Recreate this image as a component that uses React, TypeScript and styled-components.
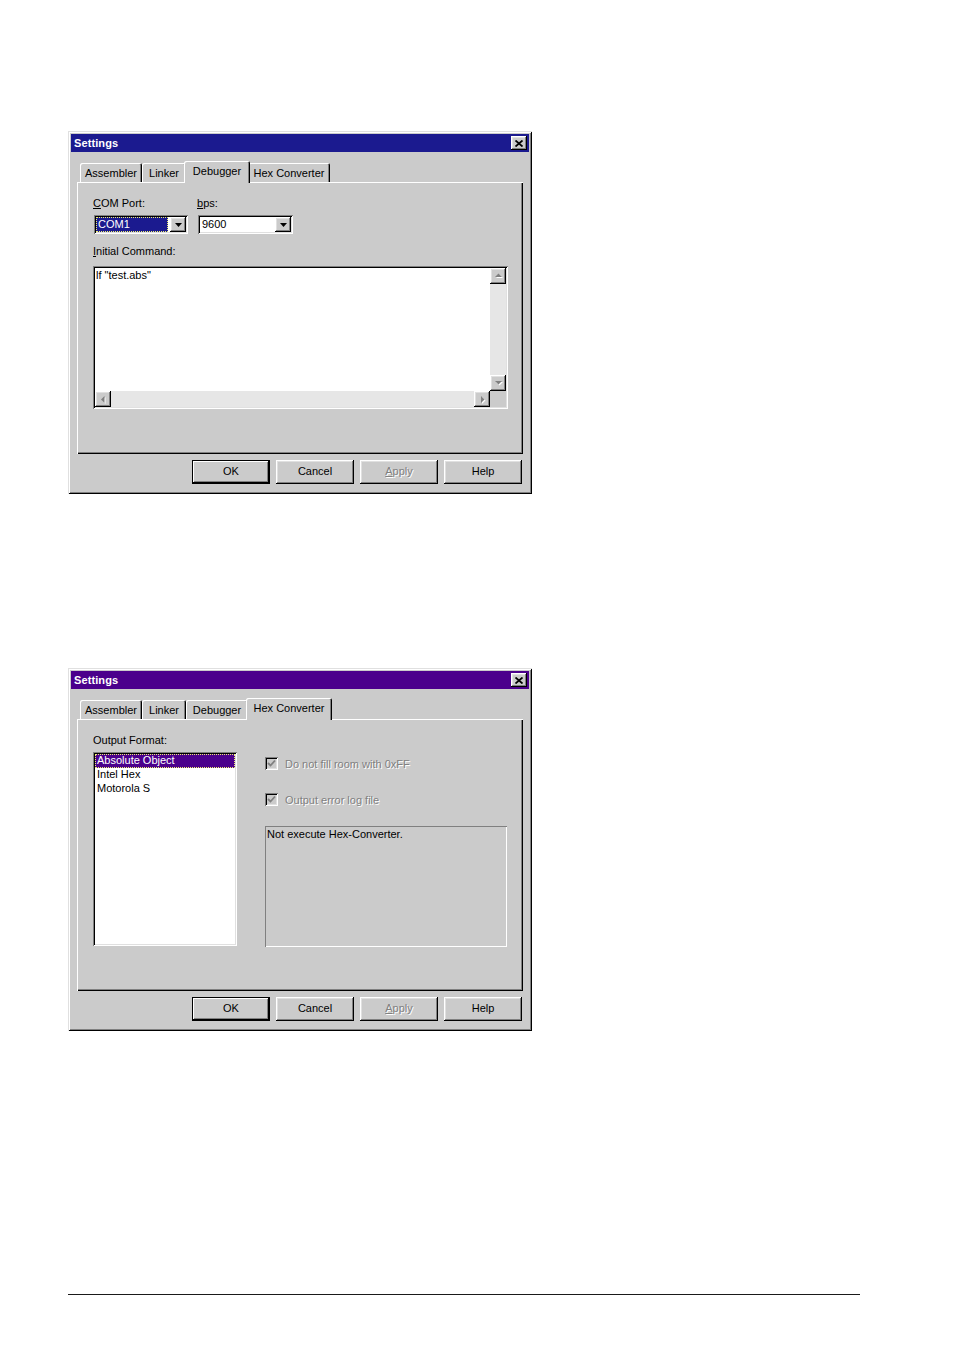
import React from "react";
import styled, { createGlobalStyle, css } from "styled-components";

const FACE = "#cbcbcb";
const SHADOW = "#808080";
const LIGHT = "#e0e0e0";

const GlobalStyle = createGlobalStyle`
  html, body { margin: 0; padding: 0; background: #fff; }
  body {
    font-family: "Liberation Sans", Arial, sans-serif;
    font-size: 11px;
    color: #000;
  }
  * { box-sizing: border-box; }
`;

const raised = css`
  box-shadow: inset -1px -1px #000, inset 1px 1px #fff, inset -2px -2px ${SHADOW}, inset 2px 2px ${LIGHT};
`;
const sunken = css`
  box-shadow: inset 1px 1px ${SHADOW}, inset -1px -1px #fff, inset 2px 2px #000, inset -2px -2px ${LIGHT};
`;

const Page = styled.div`
  display: flex;
  flex-direction: column;
  align-items: flex-start;
  padding: 131px 0 40px 68px;
`;

const Dialog = styled.div<{ $gap?: number }>`
  width: 464px;
  height: 363px;
  padding: 3px;
  margin-top: ${(p) => p.$gap ?? 0}px;
  background: ${FACE};
  display: flex;
  flex-direction: column;
  box-shadow: inset 1px 1px ${LIGHT}, inset -1px -1px #000, inset 2px 2px #fff, inset -2px -2px ${SHADOW};
`;

const TitleBar = styled.div<{ $bg: string }>`
  height: 18px;
  background: ${(p) => p.$bg};
  display: flex;
  align-items: center;
  justify-content: space-between;
  padding: 0 2px 0 3px;
`;

const TitleText = styled.span`
  color: #fff;
  font-weight: bold;
  font-size: 11px;
  letter-spacing: 0.1px;
`;

const CloseButton = styled.div`
  width: 16px;
  height: 14px;
  background: ${FACE};
  ${raised};
  display: flex;
  align-items: center;
  justify-content: center;
`;

const Body = styled.div`
  padding: 9px 6px 0 6px;
  display: flex;
  flex-direction: column;
`;

const TabStrip = styled.div`
  height: 21px;
  display: flex;
  align-items: flex-end;
  padding-left: 3px;
`;

const Tab = styled.div<{ $w: number; $active?: boolean }>`
  position: relative;
  width: ${(p) => (p.$active ? p.$w + 4 : p.$w)}px;
  height: ${(p) => (p.$active ? 22 : 19)}px;
  margin: 0 ${(p) => (p.$active ? -2 : 0)}px ${(p) => (p.$active ? -1 : 0)}px;
  z-index: ${(p) => (p.$active ? 2 : 1)};
  background: ${FACE};
  border-radius: 2px 2px 0 0;
  box-shadow: inset 1px 1px #fff, inset -1px 0 #000, inset -2px 0 ${SHADOW};
  display: flex;
  align-items: center;
  justify-content: center;
  padding-bottom: ${(p) => (p.$active ? 2 : 0)}px;
  white-space: nowrap;
`;

const Panel = styled.div`
  height: 272px;
  background: ${FACE};
  box-shadow: inset 1px 1px #fff, inset -1px -1px #000, inset -2px -2px ${SHADOW};
  padding: 15px 14px 0 16px;
  display: flex;
  flex-direction: column;
`;

const Fields = styled.div`
  display: flex;
  gap: 9px;
`;

const Field = styled.div`
  display: flex;
  flex-direction: column;
  gap: 5px;
`;

const Label = styled.span<{ $top?: number }>`
  line-height: 13px;
  height: 13px;
  margin-top: ${(p) => p.$top ?? 0}px;
`;

const U = styled.span`
  text-decoration: underline;
  text-underline-offset: 1px;
`;

const Combo = styled.div<{ $w: number }>`
  width: ${(p) => p.$w}px;
  height: 19px;
  margin-left: 1px;
  background: #fff;
  ${sunken};
  padding: 2px;
  display: flex;
`;

const ComboText = styled.div<{ $sel?: string }>`
  flex: 1;
  margin: 0 2px 0 0;
  padding-left: 2px;
  line-height: 15px;
  ${(p) =>
    p.$sel &&
    css`
      background: ${p.$sel};
      color: #fff;
      outline: 1px dotted #f0f070;
      outline-offset: -1px;
    `}
`;

const DropButton = styled.div`
  width: 16px;
  height: 15px;
  background: ${FACE};
  ${raised};
  display: flex;
  align-items: center;
  justify-content: center;
`;

const TextArea = styled.div`
  width: 415px;
  height: 143px;
  margin-top: 8px;
  background: #fff;
  ${sunken};
  padding: 2px;
  display: grid;
  grid-template-columns: 1fr 16px;
  grid-template-rows: 1fr 16px;
`;

const TextContent = styled.div`
  padding: 1px 1px;
  line-height: 13px;
`;

const ScrollV = styled.div`
  display: flex;
  flex-direction: column;
  background: #e6e6e6;
`;

const ScrollH = styled.div`
  display: flex;
  background: #e6e6e6;
`;

const Track = styled.div`
  flex: 1;
`;

const ScrollButton = styled.div`
  width: 16px;
  height: 16px;
  background: ${FACE};
  ${raised};
  display: flex;
  align-items: center;
  justify-content: center;
`;

const Corner = styled.div`
  background: ${FACE};
`;

const ButtonRow = styled.div`
  display: flex;
  justify-content: flex-end;
  gap: 6px;
  margin-top: 6px;
  padding-right: 1px;
`;

const Button = styled.div<{ $default?: boolean; $disabled?: boolean }>`
  width: 78px;
  height: 24px;
  padding-bottom: 2px;
  background: ${FACE};
  display: flex;
  align-items: center;
  justify-content: center;
  ${(p) =>
    p.$default
      ? css`
          box-shadow: inset 0 0 0 1px #000, inset -2px -2px #000, inset 2px 2px #fff, inset -3px -3px ${SHADOW};
        `
      : raised}
  ${(p) =>
    p.$disabled &&
    css`
      color: ${SHADOW};
      text-shadow: 1px 1px #fff;
    `}
`;

const Row = styled.div`
  display: flex;
  align-items: flex-start;
`;

const Column = styled.div<{ $ml?: number; $pt?: number }>`
  display: flex;
  flex-direction: column;
  margin-left: ${(p) => p.$ml ?? 0}px;
  padding-top: ${(p) => p.$pt ?? 0}px;
`;

const ListBox = styled.div`
  width: 144px;
  height: 194px;
  margin-top: 5px;
  background: #fff;
  ${sunken};
  padding: 2px;
  display: flex;
  flex-direction: column;
`;

const ListItem = styled.div<{ $sel?: string }>`
  height: 14px;
  line-height: 13px;
  padding-left: 2px;
  ${(p) =>
    p.$sel &&
    css`
      background: ${p.$sel};
      color: #fff;
      outline: 1px dotted #f0f070;
      outline-offset: -1px;
    `}
`;

const CheckRow = styled.div<{ $mt?: number }>`
  display: flex;
  align-items: center;
  gap: 7px;
  height: 13px;
  margin-top: ${(p) => p.$mt ?? 0}px;
`;

const CheckBox = styled.div`
  width: 13px;
  height: 13px;
  background: ${FACE};
  ${sunken};
  display: flex;
  align-items: center;
  justify-content: center;
`;

const DisabledText = styled.span`
  color: ${SHADOW};
  text-shadow: 1px 1px #fff;
`;

const StaticBox = styled.div`
  width: 242px;
  height: 121px;
  margin-top: 20px;
  box-shadow: inset 1px 1px ${SHADOW}, inset -1px -1px #fff;
  padding: 2px 2px;
  line-height: 13px;
`;

const FooterLine = styled.div`
  width: 792px;
  height: 1px;
  margin-top: 263px;
  background: #1a1a1a;
`;

const CloseIcon = () => (
  <svg width="8" height="7" viewBox="0 0 8 7">
    <path d="M0.5 0.5 L7.5 6.5 M7.5 0.5 L0.5 6.5" stroke="#000" strokeWidth="1.8" />
  </svg>
);

const DownArrow = () => (
  <svg width="7" height="4" viewBox="0 0 7 4">
    <path d="M0 0 H7 L3.5 4 Z" fill="#000" />
  </svg>
);

type Dir = "up" | "down" | "left" | "right";
const GrayArrow = ({ dir }: { dir: Dir }) => {
  const d: Record<Dir, string> = {
    up: "M1 5 H8 L4.5 1.5 Z",
    down: "M1 2 H8 L4.5 5.5 Z",
    left: "M5.5 1 V8 L2 4.5 Z",
    right: "M3 1 V8 L6.5 4.5 Z",
  };
  return (
    <svg width="9" height="9" viewBox="0 0 9 9">
      <path d={d[dir]} fill="#fff" transform="translate(1 1)" />
      <path d={d[dir]} fill={SHADOW} />
    </svg>
  );
};

const CheckMark = () => (
  <svg width="9" height="9" viewBox="0 0 9 9">
    <path d="M1 4 L3.5 6.5 L8 1.5" stroke={SHADOW} strokeWidth="1.8" fill="none" />
  </svg>
);

const TABS: { name: string; w: number }[] = [
  { name: "Assembler", w: 62 },
  { name: "Linker", w: 44 },
  { name: "Debugger", w: 62 },
  { name: "Hex Converter", w: 82 },
];

function Window({
  titleBg,
  active,
  gap,
  children,
}: {
  titleBg: string;
  active: string;
  gap?: number;
  children: React.ReactNode;
}) {
  return (
    <Dialog $gap={gap}>
      <TitleBar $bg={titleBg}>
        <TitleText>Settings</TitleText>
        <CloseButton>
          <CloseIcon />
        </CloseButton>
      </TitleBar>
      <Body>
        <TabStrip>
          {TABS.map((t) => (
            <Tab key={t.name} $w={t.w} $active={t.name === active}>
              {t.name}
            </Tab>
          ))}
        </TabStrip>
        <Panel>{children}</Panel>
        <ButtonRow>
          <Button $default>OK</Button>
          <Button>Cancel</Button>
          <Button $disabled>
            <U>A</U>pply
          </Button>
          <Button>Help</Button>
        </ButtonRow>
      </Body>
    </Dialog>
  );
}

const NAVY = "#1b1a8f";
const PURPLE = "#4b008c";

export default function App() {
  return (
    <>
      <GlobalStyle />
      <Page>
        <Window titleBg={NAVY} active="Debugger">
          <Fields>
            <Field>
              <Label>
                <U>C</U>OM Port:
              </Label>
              <Combo $w={94}>
                <ComboText $sel={NAVY}>COM1</ComboText>
                <DropButton>
                  <DownArrow />
                </DropButton>
              </Combo>
            </Field>
            <Field>
              <Label>
                <U>b</U>ps:
              </Label>
              <Combo $w={95}>
                <ComboText>9600</ComboText>
                <DropButton>
                  <DownArrow />
                </DropButton>
              </Combo>
            </Field>
          </Fields>
          <Label $top={11}>
            <U>I</U>nitial Command:
          </Label>
          <TextArea>
            <TextContent>lf "test.abs"</TextContent>
            <ScrollV>
              <ScrollButton>
                <GrayArrow dir="up" />
              </ScrollButton>
              <Track />
              <ScrollButton>
                <GrayArrow dir="down" />
              </ScrollButton>
            </ScrollV>
            <ScrollH>
              <ScrollButton>
                <GrayArrow dir="left" />
              </ScrollButton>
              <Track />
              <ScrollButton>
                <GrayArrow dir="right" />
              </ScrollButton>
            </ScrollH>
            <Corner />
          </TextArea>
        </Window>

        <Window titleBg={PURPLE} active="Hex Converter" gap={174}>
          <Row>
            <Column>
              <Label>Output Format:</Label>
              <ListBox>
                <ListItem $sel={PURPLE}>Absolute Object</ListItem>
                <ListItem>Intel Hex</ListItem>
                <ListItem>Motorola S</ListItem>
              </ListBox>
            </Column>
            <Column $ml={28} $pt={23}>
              <CheckRow>
                <CheckBox>
                  <CheckMark />
                </CheckBox>
                <DisabledText>Do not fill room with 0xFF</DisabledText>
              </CheckRow>
              <CheckRow $mt={23}>
                <CheckBox>
                  <CheckMark />
                </CheckBox>
                <DisabledText>Output error log file</DisabledText>
              </CheckRow>
              <StaticBox>Not execute Hex-Converter.</StaticBox>
            </Column>
          </Row>
        </Window>

        <FooterLine />
      </Page>
    </>
  );
}
